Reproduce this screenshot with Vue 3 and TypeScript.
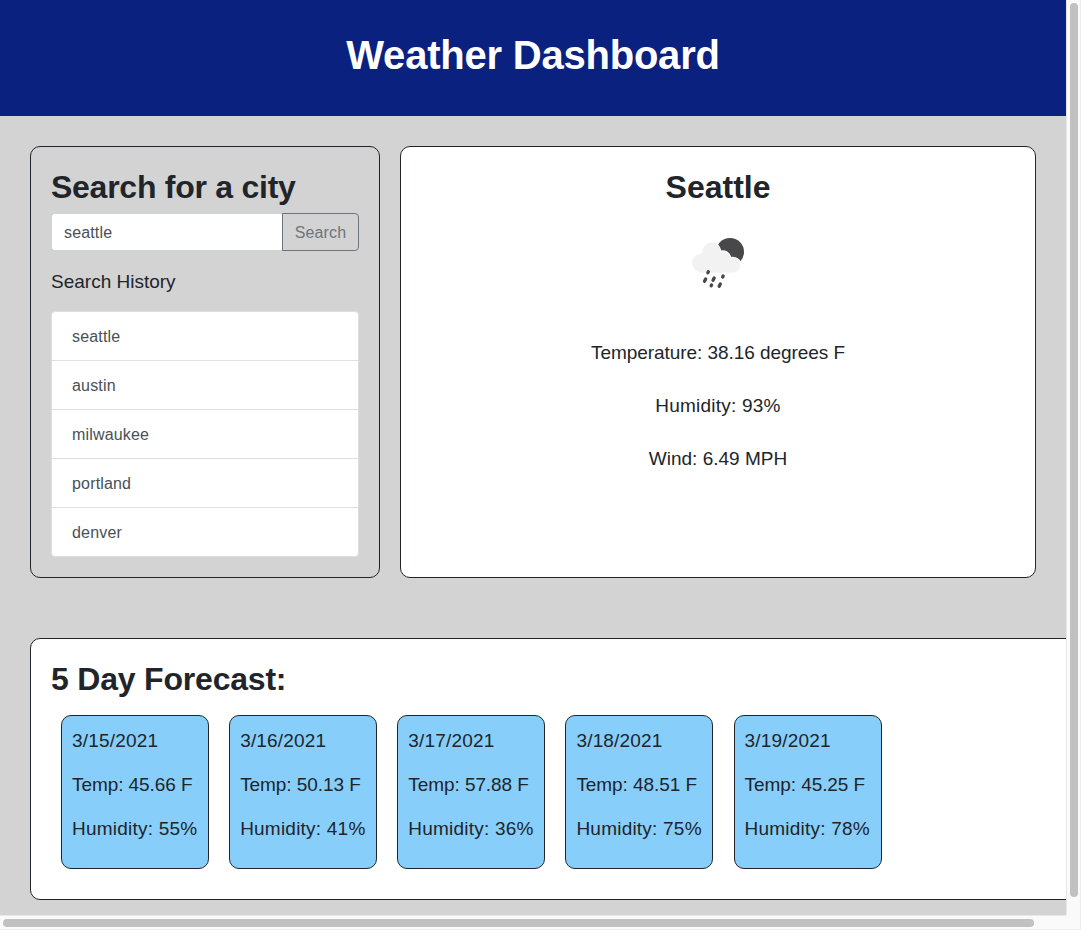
<script setup lang="ts">
import { ref } from 'vue'

interface ForecastDay {
  date: string
  temp: string
  humidity: string
}

const query = ref('seattle')
const history: string[] = ['seattle', 'austin', 'milwaukee', 'portland', 'denver']
const current = {
  city: 'Seattle',
  temperature: '38.16',
  humidity: '93',
  wind: '6.49',
}
const forecast: ForecastDay[] = [
  { date: '3/15/2021', temp: '45.66', humidity: '55' },
  { date: '3/16/2021', temp: '50.13', humidity: '41' },
  { date: '3/17/2021', temp: '57.88', humidity: '36' },
  { date: '3/18/2021', temp: '48.51', humidity: '75' },
  { date: '3/19/2021', temp: '45.25', humidity: '78' },
]

const cloud =
  'M95 158 A29 29 0 0 1 66 130 C66 114 78 102 94 101 C98 80 112 67 126 67 C138 67 147 78 152 95 C162 91 178 97 181 114 C199 110 211 121 211 134 C211 148 201 158 187 158 Z'
</script>

<template>
  <div class="window">
    <div class="page">
      <header class="banner">
        <h1>Weather Dashboard</h1>
      </header>

      <div class="top-row">
        <section class="panel search-panel">
          <h2 class="search-title">Search for a city</h2>
          <form class="search-form" @submit.prevent>
            <input v-model="query" type="text" class="search-input" />
            <button type="submit" class="search-button">Search</button>
          </form>
          <p class="history-label">Search History</p>
          <ul class="history">
            <li v-for="city in history" :key="city">{{ city }}</li>
          </ul>
        </section>

        <section class="panel current-panel">
          <h2>{{ current.city }}</h2>
          <svg class="weather-icon" viewBox="-6 -6 300 300" aria-hidden="true">
            <circle cx="180" cy="96" r="42" fill="#48484a" />
            <path :d="cloud" fill="#ffffff" stroke="#ffffff" stroke-width="6" />
            <path :d="cloud" fill="#f2f2f2" />
            <g stroke="#48484a" stroke-width="10" stroke-linecap="round">
              <path d="M113.500 158 L115 155" />
              <path d="M103.500 184 L107 177" />
              <path d="M129 181 L132.500 174" />
              <path d="M158 171 L159.500 168" />
              <path d="M123.500 197 L124.500 195" />
              <path d="M147.500 199 L151 192" />
            </g>
          </svg>
          <div class="readings">
            <p class="temperature">Temperature: {{ current.temperature }} degrees F</p>
            <p class="humidity">Humidity: {{ current.humidity }}%</p>
            <p>Wind: {{ current.wind }} MPH</p>
          </div>
        </section>
      </div>

      <section class="panel forecast-panel">
        <h2 class="forecast-title">5 Day Forecast:</h2>
        <div class="days">
          <article v-for="day in forecast" :key="day.date" class="day">
            <p class="date">{{ day.date }}</p>
            <p class="temp">Temp: {{ day.temp }} F</p>
            <p class="humidity">Humidity: {{ day.humidity }}%</p>
          </article>
        </div>
      </section>
    </div>
    <div class="scrollbar vertical"><div class="thumb"></div></div>
    <div class="scrollbar horizontal"><div class="thumb"></div></div>
    <div class="corner"></div>
  </div>
</template>

<style>
body {
  margin: 0;
  overflow: hidden;
}
</style>

<style scoped>
* {
  box-sizing: border-box;
}

.window {
  display: grid;
  grid-template-columns: 1066px 15px;
  grid-template-rows: 915px 15px;
  width: 1081px;
  height: 930px;
  font-family: 'Liberation Sans', Arial, sans-serif;
  color: #212529;
}

.page {
  overflow: hidden;
  background: #d3d3d3;
}

.banner {
  height: 116px;
  padding-top: 30px;
  background: #0a2180;
  color: #ffffff;
  text-align: center;
}

h1,
h2,
p,
ul {
  margin: 0;
}

h1 {
  font-size: 40px;
  line-height: 50px;
  letter-spacing: -0.22px;
}

h2 {
  height: 38px;
  font-size: 32px;
  line-height: 40px;
}

.search-title {
  letter-spacing: -0.26px;
}

.forecast-title {
  letter-spacing: -0.2px;
}

.top-row {
  display: grid;
  grid-template-columns: 350px 636px;
  gap: 20px;
  height: 432px;
  margin: 30px 30px 60px;
}

.panel {
  padding: 20px;
  border: 1px solid #212529;
  border-radius: 10px;
}

.search-form {
  display: flex;
  height: 38px;
  margin-top: 8px;
}

.search-input {
  flex: 1;
  min-width: 0;
  padding: 2px 12px 0;
  border: 1px solid #ced4da;
  border-right: 0;
  border-radius: 4px 0 0 4px;
  background: #ffffff;
  color: #495057;
  font: 16px 'Liberation Sans', Arial, sans-serif;
  letter-spacing: 0.15px;
  outline: none;
}

.search-button {
  width: 77px;
  padding: 2px 0 0;
  border: 1px solid #6c757d;
  border-radius: 0 4px 4px 0;
  background: transparent;
  color: #6c757d;
  font: 16px 'Liberation Sans', Arial, sans-serif;
  letter-spacing: 0.1px;
}

.history-label {
  height: 28px;
  margin: 16px 0;
  font-size: 19px;
  line-height: 30px;
}

.history {
  padding: 0;
  border: 1px solid #dfdfdf;
  border-radius: 4px;
  background: #ffffff;
  list-style: none;
  color: #495057;
  font-size: 16px;
  letter-spacing: 0.17px;
}

.history li {
  height: 49px;
  padding-left: 20px;
  border-bottom: 1px solid #dfdfdf;
  line-height: 50px;
}

.history li:last-child {
  height: 48px;
  border-bottom: 0;
}

.current-panel {
  background: #ffffff;
  text-align: center;
}

.weather-icon {
  display: block;
  width: 100px;
  height: 100px;
  margin: 13px auto 0;
}

.readings {
  display: grid;
  gap: 25px;
  margin-top: 21px;
  font-size: 19px;
  line-height: 28px;
}

.temperature {
  letter-spacing: -0.06px;
}

.humidity {
  letter-spacing: 0.22px;
}

.forecast-panel {
  width: 1200px;
  height: 262px;
  margin-left: 30px;
  background: #ffffff;
}

.days {
  display: flex;
  gap: 20.15px;
  margin: 18px 0 0 10px;
}

.day {
  width: 148px;
  height: 154px;
  padding: 11px 10px 9px;
  border: 1px solid #212529;
  border-radius: 10px;
  background: #87cefa;
  font-size: 19px;
  line-height: 28px;
  white-space: nowrap;
}

.day p {
  margin-bottom: 16px;
}

.date {
  letter-spacing: 0.18px;
}

.temp {
  letter-spacing: -0.07px;
}

.scrollbar {
  background: #fafafa;
}

.vertical {
  padding: 3px 3px 0 4px;
  border-left: 1px solid #e8e8e8;
  border-right: 1px solid #ededed;
}

.vertical .thumb {
  width: 8px;
  height: 894px;
  margin-left: -1px;
  border-radius: 4px;
  background: #c1c1c1;
}

.horizontal {
  padding: 3px 0 0 3px;
  border-top: 1px solid #e8e8e8;
  border-bottom: 1px solid #ededed;
}

.horizontal .thumb {
  width: 1031px;
  height: 8px;
  border-radius: 4px;
  background: #c1c1c1;
}

.corner {
  border-right: 1px solid #ededed;
  border-bottom: 1px solid #ededed;
  background: #fafafa;
}
</style>
